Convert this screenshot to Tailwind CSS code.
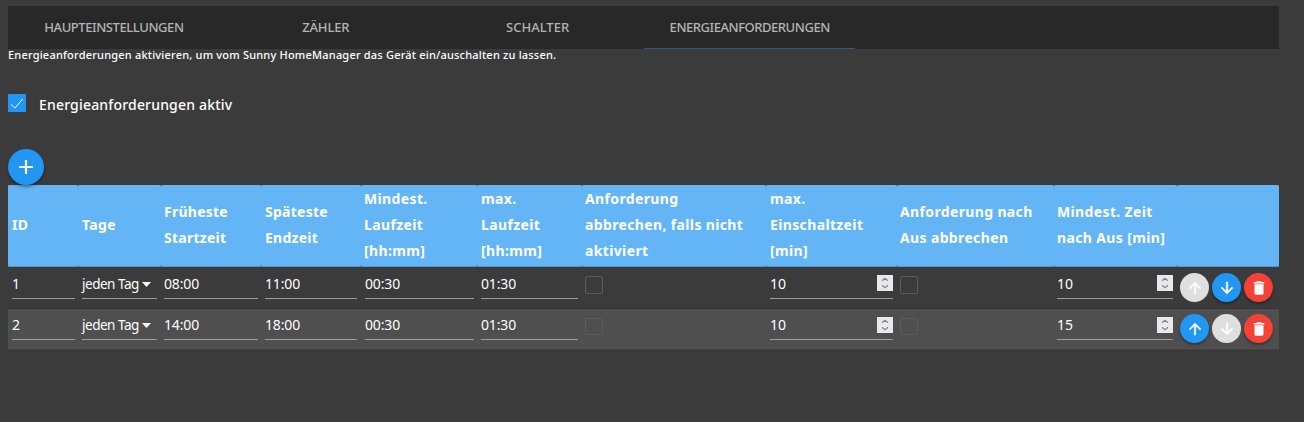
<!DOCTYPE html>
<html lang="de">
<head>
<meta charset="utf-8">
<title>Energieanforderungen</title>
<script src="https://cdn.jsdelivr.net/npm/@tailwindcss/browser@4"></script>
</head>
<body class="h-[422px] overflow-hidden bg-[#3b3b3b] pl-2 pt-1.5 font-['Noto_Sans','Open_Sans',sans-serif] text-white">
<svg class="hidden">
  <symbol id="up" viewBox="0 0 24 24"><path d="M4 12l1.41 1.41L11 7.83V20h2V7.83l5.58 5.59L20 12l-8-8-8 8z" stroke="currentColor" stroke-width=".6"/></symbol>
  <symbol id="down" viewBox="0 0 24 24"><path d="M20 12l-1.41-1.41L13 16.17V4h-2v12.17l-5.58-5.59L4 12l8 8 8-8z" stroke="currentColor" stroke-width=".6"/></symbol>
  <symbol id="del" viewBox="0 0 24 24"><path d="M6 19c0 1.1.9 2 2 2h8c1.1 0 2-.9 2-2V7H6v12zM19 4h-3.500l-1-1h-5l-1 1H5v2h14V4z"/></symbol>
  <symbol id="spin" viewBox="0 0 16 16"><rect width="16" height="16" fill="#e9e9ed"/><path d="M5.500 6V5.300L8 3.300l2.500 2V6M5.500 10v.7L8 12.700l2.500-2V10" fill="none" stroke="#85858f" stroke-width="1.300"/></symbol>
</svg>
<main class="w-[1271px]">
  <nav class="grid h-[43px] grid-cols-6 bg-[#282828] text-center text-[13px] font-medium leading-[43px] text-[#b4b4b4]">
    <div class="tracking-[-0.42px]">HAUPTEINSTELLUNGEN</div>
    <div class="tracking-[-0.15px]">ZÄHLER</div>
    <div>SCHALTER</div>
    <div class="ml-[0.6px] h-[43px] border-b border-[#34577f] tracking-[-0.46px]">ENERGIEANFORDERUNGEN</div>
  </nav>
  <p class="h-[45px] whitespace-nowrap text-[11px] font-medium leading-[12px] tracking-[0.2px]">Energieanforderungen aktivieren, um vom Sunny HomeManager das Gerät ein/auschalten zu lassen.</p>
  <label class="flex h-[18px] items-start gap-[13px]">
    <span class="size-[18px] rounded-[1px] bg-[#2196f3]"><svg class="size-[18px]" viewBox="0 0 18 18"><path d="M3 10.500l4 3.500L14.500 5" fill="none" stroke="#fff" stroke-width="1"/></svg></span>
    <span class="pt-px text-[14px] font-medium leading-5 tracking-[0.18px]">Energieanforderungen aktiv</span>
  </label>
  <button class="relative mt-[37px] flex size-9 items-center justify-center rounded-full bg-[#2196f3] shadow-[0_2px_3px_rgba(0,0,0,0.4)]"><svg class="size-[14px]" viewBox="0 0 14 14"><path d="M0 7h14M7 0v14" fill="none" stroke="#fff" stroke-width="2.200"/></svg></button>
  <div class="grid h-[82px] grid-cols-[70px_83px_100px_100px_116px_105px_184px_131px_157px_123px_102px] items-stretch bg-[#3f6f98] text-[14px] font-bold leading-[26px] tracking-[0.36px] *:flex *:items-center *:whitespace-nowrap *:rounded-[2px] *:border-b *:border-[#5297d2] *:bg-[#64b5f6] *:pb-px">
    <div class="pl-1">ID</div>
    <div class="pl-1">Tage</div>
    <div class="pl-[3px] tracking-[0.25px]">Früheste<br>Startzeit</div>
    <div class="pl-1 tracking-[0.25px]">Späteste<br>Endzeit</div>
    <div class="pl-[3px]">Mindest.<br>Laufzeit<br>[hh:mm]</div>
    <div class="pl-1">max.<br>Laufzeit<br>[hh:mm]</div>
    <div class="pl-[3px]">Anforderung<br>abbrechen, falls nicht<br>aktiviert</div>
    <div class="pl-1">max.<br>Einschaltzeit<br>[min]</div>
    <div class="pl-[3px]">Anforderung nach<br>Aus abbrechen</div>
    <div class="pl-[3px]">Mindest. Zeit<br>nach Aus [min]</div>
    <div></div>
  </div>
  <div id="rows"></div>
</main>
<script>
  const icon = (n, c) => `<svg class="${c}" fill="currentColor"><use href="#${n}"/></svg>`;
  const box = (v, c) => `<div class="border-b border-[#9e9e9e] ${c}">${v}</div>`;
  const num = (v, c) => `<div class="mr-1 flex items-start justify-between border-b border-[#9e9e9e] ${c}"><span>${v}</span>${icon('spin', 'mt-2 size-4')}</div>`;
  const check = c => `<div class="ml-[3px] mt-[9px] w-[18px] rounded-[2px] border border-[#5c5c5c] ${c}"></div>`;
  const btn = (n, c) => `<button class="flex size-[29px] items-center justify-center rounded-full ${c}">${icon(n, 'size-[18px]')}</button>`;
  const on = 'bg-[#2196f3] shadow-[0_2px_3px_rgba(0,0,0,0.35)]';
  const off = 'bg-[#dfdfdf]';
  const red = 'bg-[#f44336] shadow-[0_2px_3px_rgba(0,0,0,0.35)]';
  const data = [
    ['1', '08:00', '11:00', '00:30', '01:30', '10', '10', off, on, 'h-[42px] border-[#323232] leading-[34px]', 'h-[32px]', 'h-[18px]', 'pt-[6px]'],
    ['2', '14:00', '18:00', '00:30', '01:30', '10', '15', on, off, 'h-[41px] border-[#444444] bg-[#4f4f4f] leading-[32px]', 'h-[31px]', 'h-[17px]', 'pt-[5px]'],
  ];
  document.getElementById('rows').innerHTML = data.map(r => `
    <div class="grid grid-cols-[70px_83px_100px_100px_116px_105px_184px_131px_157px_123px_102px] items-start border-b text-[14px] ${r[9]}">
      ${box(r[0], 'ml-1 mr-[3px] ' + r[10])}
      ${box(`<span class="flex items-center gap-[3px]"><span class="text-[13.5px] tracking-[-0.48px]">jeden Tag</span><svg class="h-[5px] w-[9px] shrink-0" viewBox="0 0 9 5"><path d="M0 0h9L4.500 5z" fill="#fff"/></svg></span>`, 'ml-1 mr-1 ' + r[10])}
      ${box(r[1], 'ml-[3px] mr-[3px] tracking-[-0.15px] ' + r[10])}${box(r[2], 'ml-1 mr-1 tracking-[-0.15px] ' + r[10])}${box(r[3], 'ml-1 mr-[3px] tracking-[-0.15px] ' + r[10])}${box(r[4], 'ml-1 mr-1 tracking-[-0.15px] ' + r[10])}
      ${check(r[11])}${num(r[5], 'ml-1 ' + r[10])}${check(r[11])}${num(r[6], 'ml-[3px] ' + r[10])}
      <div class="ml-[3px] flex gap-[3px] ${r[12]}">${btn('up', r[7])}${btn('down', r[8])}${btn('del', red)}</div>
    </div>`).join('');
</script>
</body>
</html>
